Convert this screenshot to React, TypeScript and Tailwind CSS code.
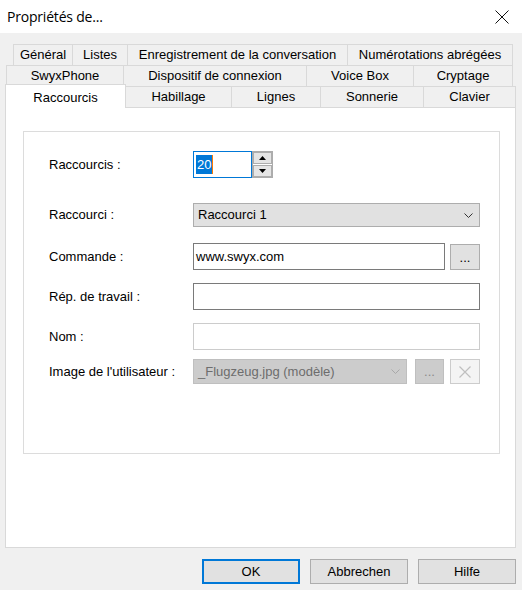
import React from "react";

const tabBase =
  "h-[21px] flex items-center justify-center border-t border-[#d9d9d9] bg-[#f0f0f0] whitespace-nowrap";

function Chevron({ color }: { color: string }) {
  return (
    <svg width="9" height="5" viewBox="0 0 9 5" className="shrink-0">
      <path d="M0.5 0.5 L4.5 4.5 L8.5 0.5" fill="none" stroke={color} strokeWidth="1" />
    </svg>
  );
}

function Row({
  label,
  top,
  children,
}: {
  label: string;
  top: string;
  children: React.ReactNode;
}) {
  return (
    <div className={`flex items-center ${top}`}>
      <div className="w-[144px] shrink-0">{label}</div>
      {children}
    </div>
  );
}

export default function App() {
  return (
    <div className="w-[522px] h-[590px] flex flex-col bg-[#f0f0f0] text-[13px] text-black font-['Liberation_Sans',Arial,sans-serif] overflow-hidden">
      {/* title bar */}
      <div className="h-[33px] bg-white flex items-center justify-between pl-[7px] pr-[13px]">
        <span className="text-[14px] font-['Open_Sans','Noto_Sans',sans-serif] tracking-[-0.2px]">
          Propriétés de...
        </span>
        <svg width="14" height="14" viewBox="0 0 14 14">
          <path d="M0.5 0.5 L13.5 13.5 M13.5 0.5 L0.5 13.5" stroke="#111" strokeWidth="1" />
        </svg>
      </div>

      {/* tab strip */}
      <div className="mt-[11px] flex flex-col">
        <div className="flex ml-[13px]">
          <div className={`${tabBase} border-l w-[59px]`}>Général</div>
          <div className={`${tabBase} border-l w-[55px]`}>Listes</div>
          <div className={`${tabBase} border-l w-[220px]`}>Enregistrement de la conversation</div>
          <div className={`${tabBase} border-l border-r w-[166px]`}>Numérotations abrégées</div>
        </div>
        <div className="flex ml-[6px]">
          <div className={`${tabBase} border-l w-[117px]`}>SwyxPhone</div>
          <div className={`${tabBase} border-l w-[183px]`}>Dispositif de connexion</div>
          <div className={`${tabBase} border-l w-[107px]`}>Voice Box</div>
          <div className={`${tabBase} border-l border-r w-[100px]`}>Cryptage</div>
        </div>
        <div className="flex items-end h-[21px]">
          <div className="relative z-10 ml-[5px] w-[121px] h-[24px] mb-[-1px] bg-white border-l border-t border-r border-[#d9d9d9] flex items-start justify-center pt-[3px]">
            Raccourcis
          </div>
          <div className={`${tabBase} w-[105px]`}>Habillage</div>
          <div className={`${tabBase} border-l w-[89px]`}>Lignes</div>
          <div className={`${tabBase} border-l w-[103px]`}>Sonnerie</div>
          <div className={`${tabBase} border-l border-r w-[93px]`}>Clavier</div>
        </div>
      </div>

      {/* tab page */}
      <div className="ml-[5px] w-[511px] h-[441px] bg-white border border-[#d9d9d9] pt-[23px] pl-[17px]">
        <div className="w-[477px] h-[323px] border border-[#dcdcdc] pl-[25px] pt-[19px] flex flex-col">
          <Row label="Raccourcis :" top="">
            <div className="w-[59px] h-[27px] border border-[#0078d7] flex items-center pl-[2px]">
              <span className="bg-[#0078d7] text-white leading-[19px] px-[1px]">20</span>
              <span className="w-[1px] h-[19px] bg-[#ff7a00]" />
            </div>
            <div className="w-[21px] h-[27px] border border-[#acacac] bg-white flex flex-col justify-between">
              <div className="h-[12px] bg-[#e5e5e5] border border-[#adadad] flex items-center justify-center">
                <svg width="7" height="4" viewBox="0 0 7 4">
                  <path d="M3.5 0 L7 4 L0 4 Z" fill="#000" />
                </svg>
              </div>
              <div className="h-[12px] bg-[#e5e5e5] border border-[#adadad] flex items-center justify-center">
                <svg width="7" height="4" viewBox="0 0 7 4">
                  <path d="M0 0 L7 0 L3.5 4 Z" fill="#000" />
                </svg>
              </div>
            </div>
          </Row>

          <Row label="Raccourci :" top="mt-[25px]">
            <div className="w-[287px] h-[24px] bg-[#e1e1e1] border border-[#adadad] flex items-center justify-between pl-[4px] pr-[6px]">
              <span>Raccourci 1</span>
              <Chevron color="#333" />
            </div>
          </Row>

          <Row label="Commande :" top="mt-[16px]">
            <div className="w-[252px] h-[27px] border border-[#7a7a7a] flex items-center pl-[2px]">
              www.swyx.com
            </div>
            <div className="ml-[5px] w-[30px] h-[26px] bg-[#e1e1e1] border border-[#adadad] flex items-end justify-center pb-[5px] leading-none">
              ...
            </div>
          </Row>

          <Row label="Rép. de travail :" top="mt-[13px]">
            <div className="w-[287px] h-[27px] border border-[#7a7a7a]" />
          </Row>

          <Row label="Nom :" top="mt-[13px]">
            <div className="w-[287px] h-[27px] border border-[#cccccc]" />
          </Row>

          <Row label="Image de l'utilisateur :" top="mt-[9px]">
            <div className="w-[214px] h-[25px] bg-[#cccccc] border border-[#bfbfbf] flex items-center justify-between pl-[4px] pr-[6px] text-[#6d6d6d]">
              <span>_Flugzeug.jpg (modèle)</span>
              <Chevron color="#a8a8a8" />
            </div>
            <div className="ml-[8px] w-[29px] h-[25px] bg-[#cccccc] border border-[#bfbfbf] flex items-end justify-center pb-[5px] leading-none text-[#8a8a8a]">
              ...
            </div>
            <div className="ml-[6px] w-[30px] h-[25px] bg-[#f4f4f4] border border-[#cccccc] flex items-center justify-center">
              <svg width="12" height="12" viewBox="0 0 12 12">
                <path d="M0.5 0.5 L11.5 11.5 M11.5 0.5 L0.5 11.5" stroke="#bfbfbf" strokeWidth="1.2" />
              </svg>
            </div>
          </Row>
        </div>
      </div>

      {/* dialog buttons */}
      <div className="mt-[11px] flex justify-end gap-[10px] pr-[6px]">
        <div className="w-[98px] h-[25px] bg-[#e1e1e1] border-2 border-[#0078d7] flex items-center justify-center">
          OK
        </div>
        <div className="w-[98px] h-[25px] bg-[#e1e1e1] border border-[#adadad] flex items-center justify-center">
          Abbrechen
        </div>
        <div className="w-[98px] h-[25px] bg-[#e1e1e1] border border-[#adadad] flex items-center justify-center">
          Hilfe
        </div>
      </div>
    </div>
  );
}
